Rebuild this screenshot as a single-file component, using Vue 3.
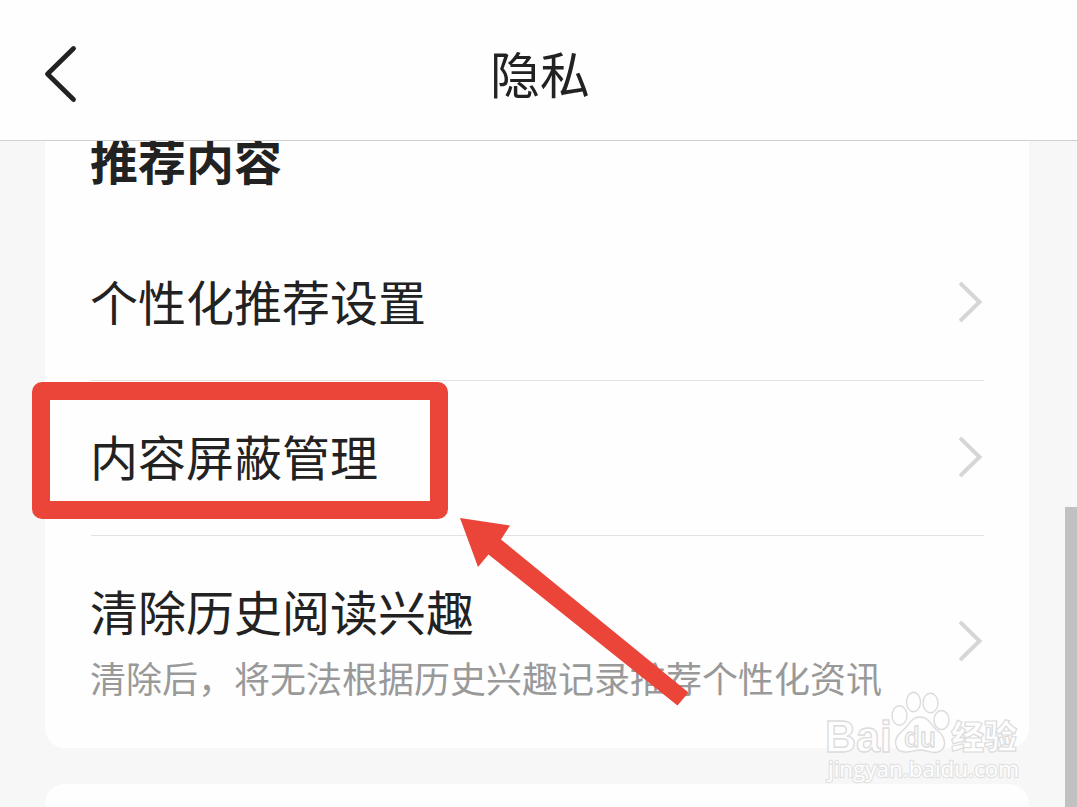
<template>
  <div class="page">
    <header class="navbar">
      <svg class="back" viewBox="0 0 36 60" fill="none">
        <path d="M31.500 4.500 5.500 30l26 25.500" />
      </svg>
      <h1 class="navbar-title">隐私</h1>
    </header>

    <main class="content">
      <section class="card">
        <h2 class="card-title">推荐内容</h2>
        <div
          v-for="item in items"
          :key="item.title"
          class="row"
          :class="{ 'row-large': item.desc }"
        >
          <div class="row-text">
            <div class="row-title">{{ item.title }}</div>
            <div v-if="item.desc" class="row-desc">{{ item.desc }}</div>
          </div>
          <svg class="chevron" viewBox="0 0 24 42" fill="none">
            <path d="M1 2 20.500 21 1 40" />
          </svg>
        </div>
      </section>
      <section class="card card-next"></section>
    </main>

    <div class="scrollbar"></div>
    <div class="highlight"></div>
    <svg class="arrow" viewBox="0 0 230 190">
      <path d="M0 0 50 7.500 41 21.500 228.500 174.500 217.500 187.500 28.500 36.500 18 49Z" />
    </svg>

    <svg class="watermark" viewBox="0 0 200 100">
      <g class="mark">
        <text x="4" y="61.500" class="logo" textLength="67" lengthAdjust="spacingAndGlyphs">Bai</text>
        <ellipse cx="78.500" cy="25.500" rx="7.500" ry="9.800" />
        <ellipse cx="92.500" cy="12" rx="7" ry="9.800" />
        <ellipse cx="109.500" cy="13" rx="7.500" ry="9.800" />
        <ellipse cx="120.500" cy="30" rx="7.500" ry="9.500" />
        <path d="M99 27C90 27 88 36 80 42C71 50 74 62 84 62C91 62.500 94 60 99 60C107 60 110 64 117 62C126 59 125 48 118 42C110 36 108 27 99 27Z" />
        <text x="83" y="57" class="du" textLength="32" lengthAdjust="spacingAndGlyphs">du</text>
        <text x="130" y="59" class="cn" textLength="66" lengthAdjust="spacingAndGlyphs">经验</text>
        <text x="7" y="87" class="url" textLength="191" lengthAdjust="spacingAndGlyphs">jingyan.baidu.com</text>
      </g>
    </svg>
  </div>
</template>

<script setup>
const items = [
  { title: '个性化推荐设置' },
  { title: '内容屏蔽管理' },
  { title: '清除历史阅读兴趣', desc: '清除后，将无法根据历史兴趣记录推荐个性化资讯' },
]
</script>

<style>
body {
  margin: 0;
  overflow: hidden;
}
</style>

<style scoped>
.page {
  position: relative;
  width: 1077px;
  height: 807px;
  overflow: hidden;
  display: flex;
  flex-direction: column;
  box-sizing: border-box;
  background: #f7f7f7;
  color: #222;
  font-family: "Noto Sans CJK SC", sans-serif;
}
.navbar {
  flex: none;
  display: flex;
  align-items: center;
  height: 141px;
  padding: 8px 42px 0;
  box-sizing: border-box;
  border-bottom: 1px solid #d0d0d0;
  background: #fefefe;
}
.back {
  width: 36px;
  height: 60px;
}
.back path {
  stroke: #222;
  stroke-width: 4.8;
  stroke-linecap: round;
  stroke-linejoin: round;
}
.navbar-title {
  flex: 1;
  margin: 0 33px 4px 0;
  text-align: center;
  font-size: 50px;
  font-weight: 400;
  line-height: 60px;
}
.content {
  flex: 1;
  min-height: 0;
  display: flex;
  flex-direction: column;
  gap: 36px;
  overflow: hidden;
  padding: 0 48px 0 45px;
}
.card {
  flex: none;
  padding: 0 45px 0 46px;
  background: #fefefe;
  border-radius: 0 0 20px 20px;
}
.card-next {
  height: 60px;
  border-radius: 20px;
}
.card-title {
  margin: 0 0 0 -1px;
  height: 85px;
  font-size: 48px;
  font-weight: 700;
  line-height: 37px;
}
.row {
  display: flex;
  align-items: center;
  justify-content: space-between;
  height: 155px;
  box-sizing: border-box;
  border-bottom: 1px solid #e2e2e2;
}
.row-large {
  height: 212px;
  border-bottom: none;
}
.row-text {
  margin-left: -1px;
  padding-bottom: 6px;
}
.row-large .row-text {
  padding-bottom: 2px;
}
.row-title {
  font-size: 48px;
  line-height: 60px;
}
.row-large .row-title {
  line-height: 70px;
  padding-bottom: 2px;
}
.row-desc {
  font-size: 36px;
  line-height: 60px;
  color: #999;
}
.chevron {
  width: 24px;
  height: 42px;
  margin: 0 1px 2px 0;
}
.chevron path {
  stroke: #d6d6d6;
  stroke-width: 4;
}
.scrollbar {
  position: absolute;
  right: 0;
  top: 507px;
  width: 12px;
  height: 300px;
  background: #c1c1c1;
}
/* cadre rouge autour de la ligne */
.highlight {
  position: absolute;
  left: 32px;
  top: 382px;
  width: 416px;
  height: 137px;
  box-sizing: border-box;
  border: 18px solid #ea4538;
  border-radius: 10px;
}
.arrow {
  position: absolute;
  left: 460px;
  top: 518px;
  width: 230px;
  height: 190px;
  fill: #ea4538;
}
.watermark {
  position: absolute;
  left: 821px;
  top: 690px;
  width: 200px;
  height: 100px;
  overflow: visible;
}
.mark {
  fill: #fefefe;
  stroke: #dcdcdc;
  stroke-width: 1.4;
}
.logo {
  font: 700 45px "Liberation Sans", sans-serif;
}
.du {
  font: 600 27px "Open Sans", sans-serif;
}
.cn {
  font: 900 33px "Noto Sans CJK SC", sans-serif;
  stroke-width: 1.2;
}
.url {
  font: 400 22px "Open Sans", sans-serif;
  stroke: #e2e2e2;
  stroke-width: 2.4;
  paint-order: stroke;
}
</style>
